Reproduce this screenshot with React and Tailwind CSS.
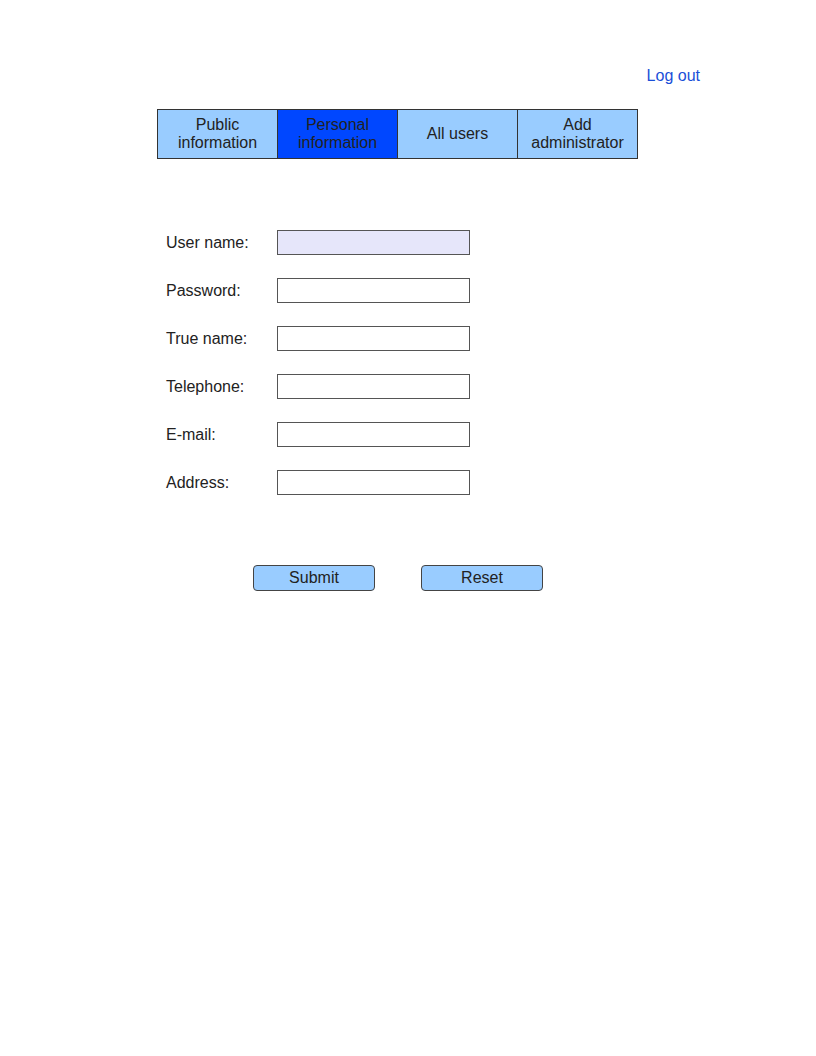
import React from 'react'

const tabs = [
  { label: ['Public', 'information'] },
  { label: ['Personal', 'information'], active: true },
  { label: ['All users'] },
  { label: ['Add', 'administrator'] },
]

const fields = [
  { label: 'User name:', filled: true },
  { label: 'Password:', type: 'password' },
  { label: 'True name:' },
  { label: 'Telephone:' },
  { label: 'E-mail:' },
  { label: 'Address:' },
]

const App = () => {
  return (
    <div className="min-h-[1056px] w-[816px] bg-white text-[16px] leading-[18px] text-[#222]" style={{ fontFamily: '"Liberation Sans", Arial, sans-serif' }}>
      <div className="ml-[157px] w-[543px] pt-[67px]">
        {/* Top link */}
        <div className="flex justify-end">
          <a href="#" className="text-[#1a4fd8]">Log out</a>
        </div>

        {/* Tabs */}
        <div className="mt-[24px] flex w-[481px] border border-[#333] bg-[#99ccff]">
          {tabs.map((tab, i) => (
            <div
              key={i}
              className={`flex h-[48px] flex-col items-center justify-center text-center ${i > 0 ? 'w-[120px] border-l border-[#333]' : 'w-[119px]'} ${tab.active ? 'bg-[#0047ff]' : 'bg-[#99ccff]'}`}
            >
              {tab.label.map((line, j) => (
                <span key={j}>{line}</span>
              ))}
            </div>
          ))}
        </div>
      </div>

      {/* Form */}
      <form className="ml-[166px] mt-[71px] flex flex-col gap-[23px]">
        {fields.map((field, i) => (
          <div key={i} className="flex items-center">
            <label className="w-[111px]">{field.label}</label>
            <input
              type={field.type || 'text'}
              className={`h-[25px] w-[193px] border border-[#555] px-1 outline-none ${field.filled ? 'bg-[#e6e6fa]' : 'bg-white'}`}
            />
          </div>
        ))}

        <div className="ml-[87px] mt-[47px] flex gap-[46px]">
          <button type="button" className="h-[26px] w-[122px] rounded-[4px] border border-[#444] bg-[#99ccff] text-[#222]">Submit</button>
          <button type="reset" className="h-[26px] w-[122px] rounded-[4px] border border-[#444] bg-[#99ccff] text-[#222]">Reset</button>
        </div>
      </form>
    </div>
  )
}

export default App
